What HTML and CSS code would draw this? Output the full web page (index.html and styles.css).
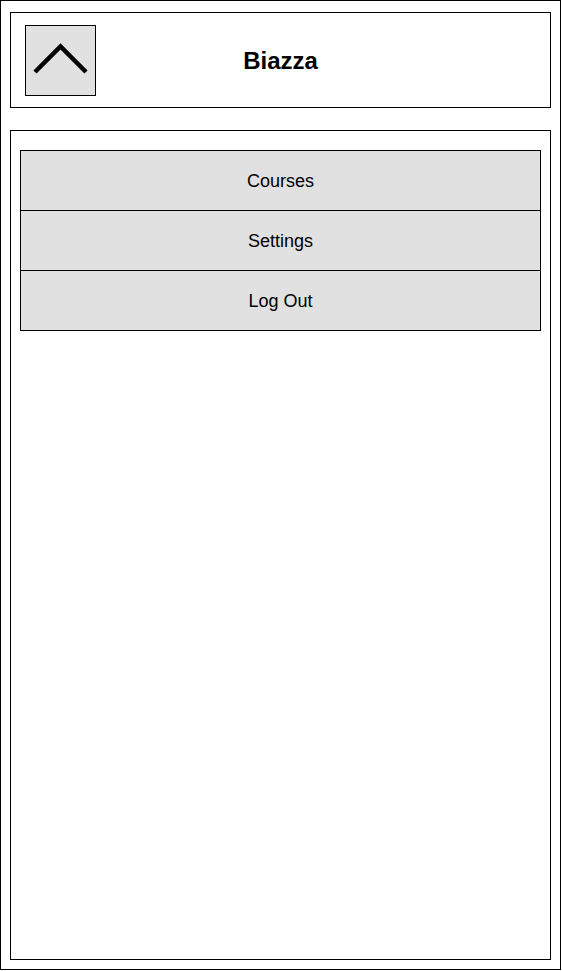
FILE: index.html
```html
<!DOCTYPE html>
<html>
<head>
<meta charset="utf-8">
<link rel="stylesheet" href="styles.css">
</head>
<body>
<div class="frame">
  <header class="header">
    <div class="toggle">
      <svg width="69" height="69" viewBox="0 0 69 69">
        <polyline points="9,46 34.5,20.5 60,46" fill="none" stroke="#000" stroke-width="4.5"/>
      </svg>
    </div>
    <h1 class="title">Biazza</h1>
  </header>
  <nav class="panel">
    <div class="item">Courses</div>
    <div class="item">Settings</div>
    <div class="item">Log Out</div>
  </nav>
</div>
</body>
</html>
```
FILE: styles.css
```css
html, body {
  margin: 0;
  padding: 0;
  background: #fff;
}
body {
  font-family: "Liberation Sans", Arial, sans-serif;
  color: #000;
}
* { box-sizing: border-box; }
.frame {
  width: 561px;
  height: 970px;
  border: 1px solid #000;
  padding: 11px 9px 9px 9px;
  display: flex;
  flex-direction: column;
}
.header {
  height: 96px;
  border: 1px solid #000;
  padding: 12px 14px 11px 14px;
  display: grid;
  grid-template-columns: 1fr auto 1fr;
  align-items: center;
}
.toggle {
  width: 71px;
  height: 71px;
  border: 1px solid #000;
  background: #e1e1e1;
}
.toggle svg { display: block; }
.title {
  margin: 0;
  font-size: 24px;
  font-weight: bold;
  padding-top: 0;
}
.panel {
  flex: 1;
  margin-top: 22px;
  border: 1px solid #000;
  padding: 19px 9px 9px 9px;
}
.item {
  height: 61px;
  border: 1px solid #000;
  background: #e1e1e1;
  display: flex;
  align-items: center;
  justify-content: center;
  font-size: 18px;
  padding-top: 2px;
}
.item + .item { margin-top: -1px; }
```
